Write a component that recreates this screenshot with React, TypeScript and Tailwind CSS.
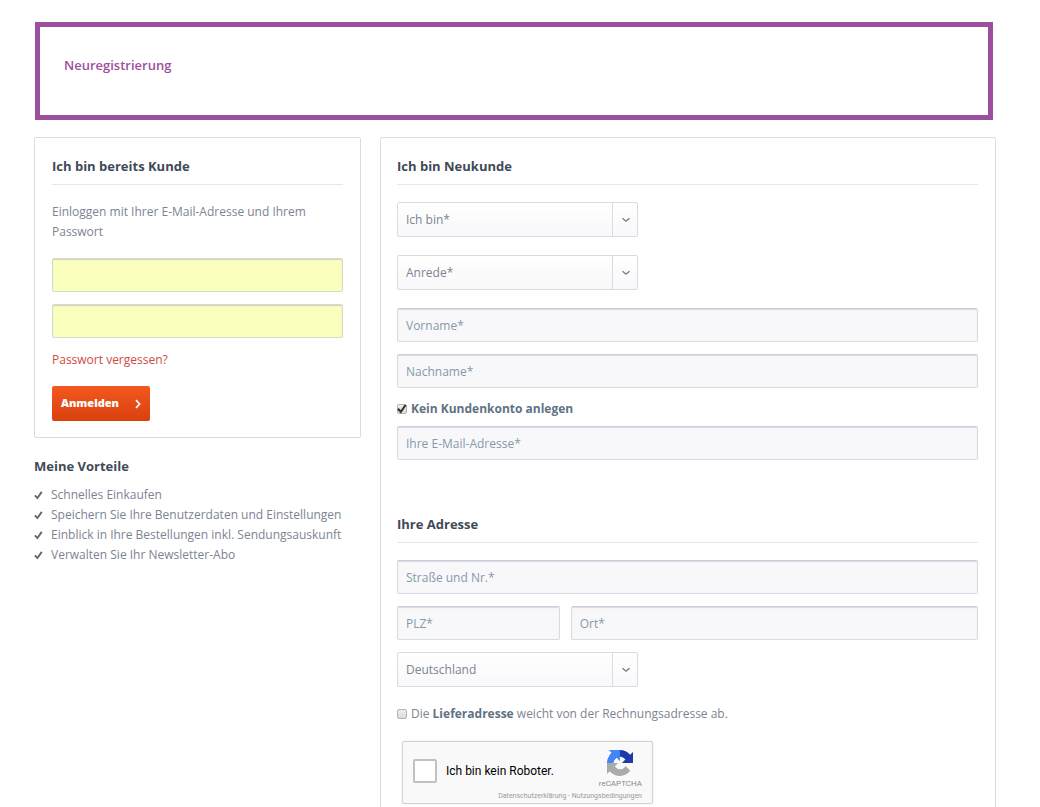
import { ReactNode } from 'react';

interface TextFieldProps {
  label: string;
  type?: string;
  className?: string;
}

interface SelectFieldProps {
  label: string;
  options: string[];
}

interface CheckFieldProps {
  id: string;
  defaultChecked?: boolean;
  children: ReactNode;
}

const benefits = [
  'Schnelles Einkaufen',
  'Speichern Sie Ihre Benutzerdaten und Einstellungen',
  'Einblick in Ihre Bestellungen inkl. Sendungsauskunft',
  'Verwalten Sie Ihr Newsletter-Abo',
];

function CheckIcon({ className }: { className?: string }) {
  return (
    <svg viewBox="0 0 10 10" className={className} aria-hidden="true">
      <path d="M1 4.8 L3.8 7.8 L8.6 1" fill="none" stroke="currentColor" strokeWidth="2.1" />
    </svg>
  );
}

function PanelTitle({ children }: { children: ReactNode }) {
  return (
    <h2 className="border-b border-[#e6e7ea] pb-1.5 text-[13px] leading-6 font-bold text-[#3f4a58]">
      {children}
    </h2>
  );
}

function TextField({ label, type = 'text', className = 'w-full' }: TextFieldProps) {
  return (
    <input
      type={type}
      aria-label={label}
      placeholder={label}
      className={`${className} h-[34px] rounded-xs border border-[#dadae5] border-t-[#cbcbdb] bg-[#f8f8fa] px-2 text-xs text-[#5f7285] shadow-[inset_0_1px_1px_#dadae5] placeholder:text-[#8798a9]`}
    />
  );
}

function LoginField({ label, type }: TextFieldProps) {
  return (
    <input
      type={type}
      aria-label={label}
      className="block h-[34px] w-full rounded-xs border border-[#d8dacf] bg-[#faffbd] px-2 text-xs shadow-[inset_0_1px_1px_#d0d3b8]"
    />
  );
}

function SelectField({ label, options }: SelectFieldProps) {
  return (
    <div className="relative w-[241px]">
      <select
        aria-label={label}
        className="block h-[35px] w-full appearance-none rounded-xs border border-[#dadae5] bg-linear-to-b from-white to-[#f8f8fa] pr-8 pl-2 text-xs text-[#7c8492]"
      >
        {options.map((option) => (
          <option key={option}>{option}</option>
        ))}
      </select>
      <span className="pointer-events-none absolute inset-y-0 right-0 flex w-[26px] items-center justify-center border-l border-[#dadae5]">
        <svg viewBox="0 0 10 6" className="h-1.5 w-2.5" aria-hidden="true">
          <path d="M1.5 1.2 L5 4.2 L8.5 1.2" fill="none" stroke="#747c89" strokeWidth="1.4" />
        </svg>
      </span>
    </div>
  );
}

function CheckField({ id, defaultChecked, children }: CheckFieldProps) {
  return (
    <div className="flex h-5 items-center gap-1">
      <span className="relative flex size-2.5">
        <input
          id={id}
          type="checkbox"
          defaultChecked={defaultChecked}
          className="peer size-2.5 appearance-none rounded-xs border border-[#b4b4b4] bg-linear-to-b from-[#ededed] to-[#dcdcdc]"
        />
        <CheckIcon className="pointer-events-none absolute inset-0 hidden size-2.5 text-[#333333] peer-checked:block" />
      </span>
      <label htmlFor={id} className="text-xs leading-5">
        {children}
      </label>
    </div>
  );
}

function RecaptchaLogo() {
  return (
    <svg viewBox="0 0 64 64" className="size-[26px]" aria-hidden="true">
      <path
        fill="#1c3aa9"
        d="M64 31.955l-.033-1.37V4.687l-7.16 7.16C50.948 4.674 42.033.093 32.05.093c-10.4 0-19.622 4.96-25.458 12.64l11.736 11.86a15.55 15.55 0 0 1 4.754-5.334c2.05-1.6 4.952-2.906 8.968-2.906.485 0 .86.057 1.135.163 4.976.393 9.288 3.14 11.828 7.124l-8.307 8.307L64 31.953"
      />
      <path
        fill="#4285f4"
        d="M31.862.094l-1.37.033H4.594l7.16 7.16C4.58 13.147 0 22.06 0 32.046c0 10.4 4.96 19.622 12.64 25.458L24.5 45.768a15.55 15.55 0 0 1-5.334-4.754c-1.6-2.05-2.906-4.952-2.906-8.968 0-.485.057-.86.163-1.135.393-4.976 3.14-9.288 7.124-11.828l8.307 8.307L31.86.095"
      />
      <path
        fill="#ababab"
        d="M.001 32.045l.033 1.37v25.898l7.16-7.16c5.86 7.173 14.774 11.754 24.76 11.754 10.4 0 19.622-4.96 25.458-12.64l-11.736-11.86a15.55 15.55 0 0 1-4.754 5.334c-2.05 1.6-4.952 2.906-8.968 2.906-.485 0-.86-.057-1.135-.163-4.976-.393-9.288-3.14-11.828-7.124l8.307-8.307c-10.522.04-22.4.066-27.295-.005"
      />
    </svg>
  );
}

function Recaptcha() {
  return (
    <div className="ml-[5px] flex h-[63px] w-[251px] rounded-xs border border-[#d3d3d3] bg-[#f9f9f9] px-2.5 font-[Roboto,sans-serif] shadow-[0_0_2px_#e4e4e4]">
      <div className="flex h-[58px] items-center gap-[9px]">
        <input
          id="robot"
          type="checkbox"
          className="size-6 appearance-none rounded-xs border-2 border-[#c1c1c1] bg-white"
        />
        <label htmlFor="robot" className="text-xs whitespace-nowrap text-black">
          Ich bin kein Roboter.
        </label>
      </div>
      <div className="flex flex-1 flex-col items-end pt-2">
        <div className="flex flex-col items-center">
          <RecaptchaLogo />
          <span className="text-[8px] leading-4 text-[#8a8a8a]">reCAPTCHA</span>
        </div>
        <div className="flex w-0 justify-end text-[7px] leading-2 whitespace-nowrap text-[#999999]">
          <a href="#datenschutz">Datenschutzerklärung</a>
          <span className="whitespace-pre"> - </span>
          <a href="#nutzung">Nutzungsbedingungen</a>
        </div>
      </div>
    </div>
  );
}

function LoginPanel() {
  return (
    <form className="rounded-xs border border-[#dadae0] px-[17px] py-4">
      <PanelTitle>Ich bin bereits Kunde</PanelTitle>
      <p className="mt-[17px] text-xs leading-5">Einloggen mit Ihrer E-Mail-Adresse und Ihrem Passwort</p>
      <div className="mt-4 flex flex-col gap-3">
        <LoginField label="E-Mail-Adresse" type="email" />
        <LoginField label="Passwort" type="password" />
      </div>
      <a href="#passwort" className="mt-3 block w-fit text-xs leading-5 text-[#cf4b3f]">
        Passwort vergessen?
      </a>
      <button
        type="button"
        className="mt-4 flex h-[35px] items-center gap-4 rounded-xs bg-linear-to-b from-[#f4581f] to-[#d8400d] px-[9px] text-[11px] font-extrabold text-white"
      >
        Anmelden
        <svg viewBox="0 0 6 10" className="h-2.5 w-1.5" aria-hidden="true">
          <path d="M1 1.2 L4.6 5 L1 8.8" fill="none" stroke="currentColor" strokeWidth="1.7" />
        </svg>
      </button>
    </form>
  );
}

function Benefits() {
  return (
    <section className="mt-4">
      <h2 className="text-[13px] leading-6 font-bold text-[#3f4a58]">Meine Vorteile</h2>
      <ul className="mt-[7px] text-xs leading-5">
        {benefits.map((benefit) => (
          <li key={benefit} className="flex items-center gap-2 whitespace-nowrap">
            <CheckIcon className="size-[9px] text-[#5f6873]" />
            {benefit}
          </li>
        ))}
      </ul>
    </section>
  );
}

function RegisterPanel() {
  return (
    <form className="rounded-xs border border-[#dadae0] py-4 pr-[17px] pl-4">
      <PanelTitle>Ich bin Neukunde</PanelTitle>
      <div className="mt-[17px] flex flex-col gap-[18px]">
        <SelectField label="Ich bin" options={['Ich bin*', 'Privatkunde', 'Firma']} />
        <SelectField label="Anrede" options={['Anrede*', 'Frau', 'Herr']} />
      </div>
      <div className="mt-[18px] flex flex-col gap-3">
        <TextField label="Vorname*" />
        <TextField label="Nachname*" />
      </div>
      <div className="mt-[11px] mb-[7px]">
        <CheckField id="guest" defaultChecked>
          <strong className="text-[#5f7285]">Kein Kundenkonto anlegen</strong>
        </CheckField>
      </div>
      <TextField label="Ihre E-Mail-Adresse*" type="email" />

      <div className="mt-[52px]">
        <PanelTitle>Ihre Adresse</PanelTitle>
      </div>
      <div className="mt-[17px] flex flex-col gap-3">
        <TextField label="Straße und Nr.*" />
        <div className="flex gap-[11px]">
          <TextField label="PLZ*" className="w-[28%]" />
          <TextField label="Ort*" className="min-w-0 flex-1" />
        </div>
        <SelectField label="Land" options={['Deutschland', 'Österreich', 'Schweiz']} />
      </div>
      <div className="my-[17px]">
        <CheckField id="shipping">
          Die <strong className="text-[#5f7285]">Lieferadresse</strong> weicht von der Rechnungsadresse ab.
        </CheckField>
      </div>
      <Recaptcha />
    </form>
  );
}

export default function App() {
  return (
    <main className="min-h-screen bg-white pt-[22px] pr-11 pl-[34px] font-['Open_Sans',sans-serif] text-[#7c8492]">
      <header className="mr-[3px] ml-px h-[98px] border-5 border-[#9c4f9c] px-6 pt-7">
        <h1 className="text-[13px] leading-5 font-semibold text-[#9c4f9c]">Neuregistrierung</h1>
      </header>
      <div className="mt-[17px] grid grid-cols-[327px_1fr] items-start gap-[19px]">
        <div>
          <LoginPanel />
          <Benefits />
        </div>
        <RegisterPanel />
      </div>
    </main>
  );
}
